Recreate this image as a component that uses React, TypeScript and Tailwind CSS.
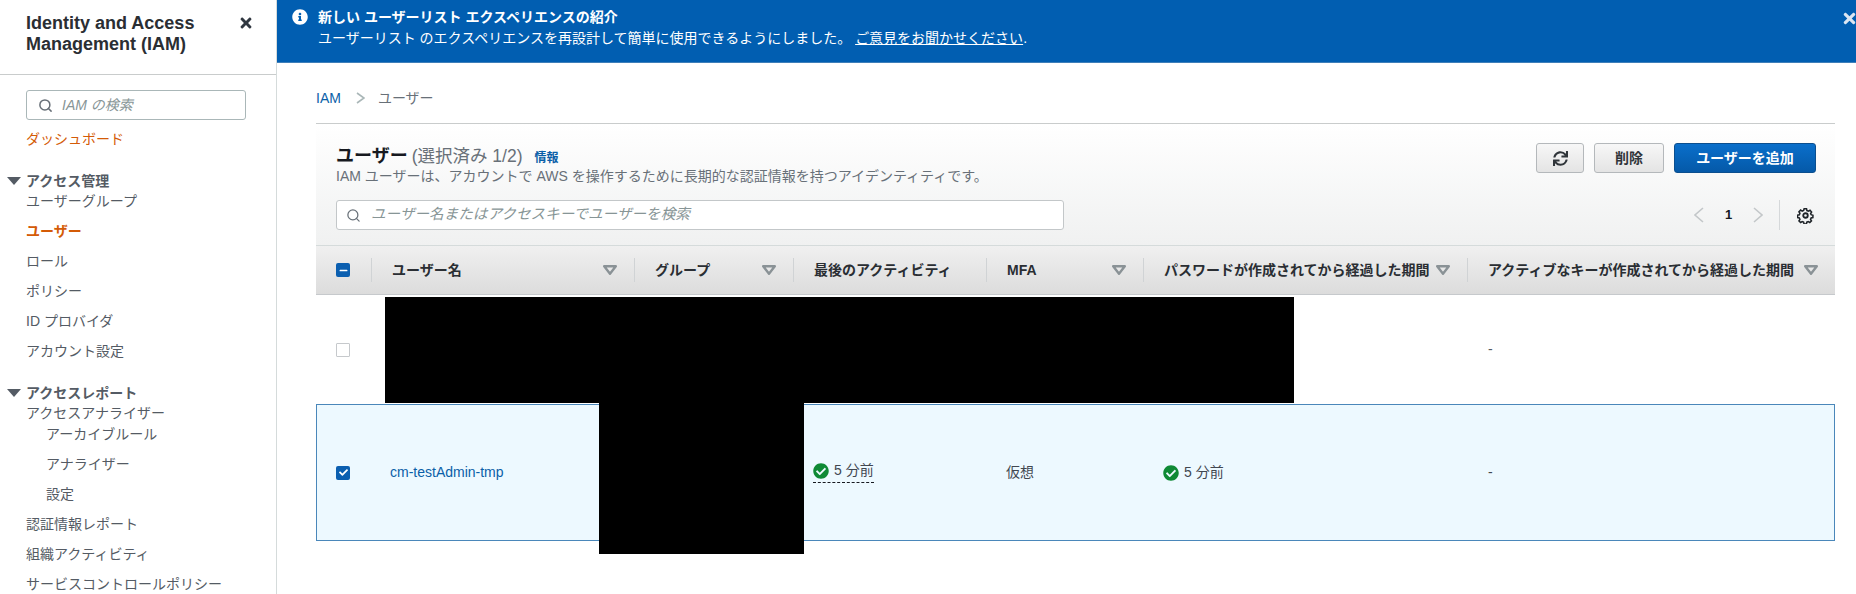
import { FaCheckCircle, FaInfoCircle, FaSync, FaTimes, FaMinus, FaCheck } from "react-icons/fa";
import { Search } from "lucide-react";

const FONT = "font-['Liberation_Sans','Noto_Sans_CJK_JP',sans-serif]";

function Caret() {
  return <span className="w-0 h-0 border-x-[7px] border-x-transparent border-t-[8px] border-t-[#545b64]" />;
}

function NavItem({ children, nested, h = "h-[30px]", className = "" }: { children: React.ReactNode; nested?: boolean; h?: string; className?: string }) {
  return (
    <div className={`flex items-center text-[14px] ${h} ${nested ? "pl-[46px]" : "pl-[26px]"} ${className || "text-[#545b64]"}`}>
      {children}
    </div>
  );
}

function NavGroup({ label }: { label: string }) {
  return (
    <div className="flex items-center h-[20px] pl-[7px] gap-[5px] text-[14px] font-bold text-[#545b64]">
      <Caret />
      <span>{label}</span>
    </div>
  );
}

function Sidebar() {
  return (
    <aside className="w-[277px] shrink-0 border-r border-[#d5dbdb] h-[594px] overflow-hidden">
      <div className="relative h-[75px] border-b border-[#c9cccc] pl-[26px] pt-[13px] text-[18px] leading-[21px] font-bold text-[#2a2e33]">
        Identity and Access
        <br />
        Management (IAM)
        <FaTimes className="absolute left-[238px] top-[15px] text-[#303740] text-[16px]" />
      </div>
      <div className="mt-[15px] ml-[26px] w-[220px] h-[30px] rounded-[3px] border border-[#aab7b8] flex items-center pl-[11px] gap-[9px]">
        <Search className="w-[15px] h-[15px] text-[#687078]" strokeWidth={2.4} />
        <span className="italic text-[14px] text-[#879596]">IAM の検索</span>
      </div>
      <NavItem className="text-[#d45b07] mt-[4px]">ダッシュボード</NavItem>
      <div className="mt-[17px]">
        <NavGroup label="アクセス管理" />
      </div>
      <NavItem h="h-[20px]">ユーザーグループ</NavItem>
      <NavItem className="text-[#d45b07] font-bold mt-[5px]">ユーザー</NavItem>
      <NavItem>ロール</NavItem>
      <NavItem>ポリシー</NavItem>
      <NavItem>ID プロバイダ</NavItem>
      <NavItem>アカウント設定</NavItem>
      <div className="mt-[17px]">
        <NavGroup label="アクセスレポート" />
      </div>
      <NavItem h="h-[20px]">アクセスアナライザー</NavItem>
      <NavItem nested h="h-[20px]" className="text-[#545b64] mt-[1px]">アーカイブルール</NavItem>
      <NavItem nested h="h-[30px]" className="text-[#545b64] mt-[5px]">アナライザー</NavItem>
      <NavItem nested>設定</NavItem>
      <NavItem>認証情報レポート</NavItem>
      <NavItem>組織アクティビティ</NavItem>
      <NavItem>サービスコントロールポリシー</NavItem>
    </aside>
  );
}

function Banner() {
  return (
    <div className="relative h-[63px] bg-[#015eb1] border-b border-[#3f7fb9] flex text-white text-[14px] pl-[15px]">
      <FaInfoCircle className="mt-[9px] text-[16px] shrink-0" />
      <div className="pl-[10px] pt-[7px] leading-[21px]">
        <div className="font-bold">新しい ユーザーリスト エクスペリエンスの紹介</div>
        <div>
          ユーザーリスト のエクスペリエンスを再設計して簡単に使用できるようにしました。 <span className="underline">ご意見をお聞かせください</span>.
        </div>
      </div>
      <FaTimes className="absolute right-[-2px] top-[10px] text-[17px] text-[#dce6f2]" />
    </div>
  );
}

function Checkbox({ state }: { state: "off" | "on" | "mixed" }) {
  if (state === "off") return <span className="block w-[14px] h-[14px] rounded-[1px] border border-[#c6c9cc] bg-white" />;
  return (
    <span className="flex items-center justify-center w-[14px] h-[14px] rounded-[2px] bg-[#0b5fb0] text-white text-[9px]">
      {state === "on" ? <FaCheck /> : <FaMinus />}
    </span>
  );
}

function SortCaret() {
  return (
    <svg width="14" height="10" viewBox="0 0 14 10" className="shrink-0">
      <path d="M1.2 1.2h11.6L7 8.8z" fill="#e8e8e8" stroke="#8a9296" strokeWidth="2.4" strokeLinejoin="round" />
    </svg>
  );
}

function Chevron({ dir, w, h, color, className = "" }: { dir: "left" | "right"; w: number; h: number; color: string; className?: string }) {
  const d = dir === "left" ? `M${w - 1} 1L1 ${h / 2}L${w - 1} ${h - 1}` : `M1 1L${w - 1} ${h / 2}L1 ${h - 1}`;
  return (
    <svg width={w} height={h} viewBox={`0 0 ${w} ${h}`} fill="none" stroke={color} strokeWidth="1.6" className={`shrink-0 ${className}`}>
      <path d={d} />
    </svg>
  );
}

const columns = [
  { label: "ユーザー名", sort: true },
  { label: "グループ", sort: true },
  { label: "最後のアクティビティ", sort: false },
  { label: "MFA", sort: true },
  { label: "パスワードが作成されてから経過した期間", sort: true },
  { label: "アクティブなキーが作成されてから経過した期間", sort: true },
];

const gridCols = "grid grid-cols-[55px_263px_159px_193px_157px_324px_1fr]";

function TableHeader() {
  return (
    <div className={`${gridCols} h-[50px] items-center border-y border-[#d5dbdb] border-b-[#c6c9cc] bg-gradient-to-b from-[#f0f0f0] to-[#dcdcdc] text-[14px] font-bold text-[#2a2e33]`}>
      <div className="pl-[20px]">
        <Checkbox state="mixed" />
      </div>
      {columns.map((c) => (
        <div key={c.label} className="flex items-center justify-between h-[24px] pl-[20px] pr-[17px] border-l border-[#d0d3d5] whitespace-nowrap">
          <span>{c.label}</span>
          {c.sort && <SortCaret />}
        </div>
      ))}
    </div>
  );
}

function TimeAgo() {
  return (
    <span className="flex items-center gap-[5px]">
      <FaCheckCircle className="text-[#0f8a35] text-[16px]" />5 分前
    </span>
  );
}

function UsersTable() {
  return (
    <section className="mt-[13px] mr-[21px] border-t border-[#c9cccc]">
      <div className="relative h-[121px] bg-gradient-to-b from-white to-[#f0f1f1] pl-[20px] pr-[19px]">
        <div className="flex justify-between">
          <div className="pt-[19px]">
            <div className="flex items-baseline text-[#16191f] h-[24px]">
              <span className="text-[18px] font-bold">ユーザー</span>
              <span className="text-[17.5px] text-[#687078] ml-[4px]">(選択済み 1/2)</span>
              <span className="text-[12px] font-bold text-[#0a5fa8] ml-[12px]">情報</span>
            </div>
            <div className="text-[14px] text-[#687078] leading-[20px] mt-[-1px]">
              IAM ユーザーは、アカウントで AWS を操作するために長期的な認証情報を持つアイデンティティです。
            </div>
          </div>
          <div className="flex items-start gap-[10px] pt-[19px] text-[14px] font-bold">
            <button className="w-[48px] h-[30px] flex items-center justify-center rounded-[3px] border border-[#b4b8bb] bg-gradient-to-b from-[#f7f7f7] to-[#e4e4e4] text-[#30353a]">
              <FaSync className="text-[15px]" />
            </button>
            <button className="w-[70px] h-[30px] rounded-[3px] border border-[#b4b8bb] bg-gradient-to-b from-[#f7f7f7] to-[#e4e4e4] text-[#30353a]">
              削除
            </button>
            <button className="w-[142px] h-[30px] rounded-[3px] border border-[#0b4f8f] bg-gradient-to-b from-[#0a6fcb] to-[#0559a8] text-white">
              ユーザーを追加
            </button>
          </div>
        </div>
        <div className="flex justify-between items-center mt-[14px] h-[30px]">
          <div className="w-[728px] h-[30px] rounded-[3px] border border-[#c3c7c9] bg-white flex items-center pl-[9px] gap-[10px]">
            <Search className="w-[15px] h-[15px] text-[#687078]" />
            <span className="italic text-[14.6px] text-[#879596]">ユーザー名またはアクセスキーでユーザーを検索</span>
          </div>
          <div className="flex items-center h-[30px] mr-[2px] text-[#16191f]">
            <Chevron dir="left" w={10} h={16} color="#c3c7c9" />
            <span className="w-[49px] text-center text-[13px] font-bold">1</span>
            <Chevron dir="right" w={10} h={16} color="#c3c7c9" />
            <span className="w-px h-[30px] bg-[#d5d8da] ml-[16px]" />
            <svg width="17" height="17" viewBox="0 0 24 24" fill="none" stroke="#1f2429" strokeWidth="2.6" className="ml-[17px]">
              <path d="M10 2h4l.7 3 2.6 1.1 2.6-1.6 2.6 2.9-1.6 2.5.9 2.1 3 .9-.1 3.9-3 .6-1 2.5 1.6 2.6-2.8 2.6-2.6-1.6-2.4 1-.7 3h-4l-.7-3-2.4-1-2.6 1.6-2.8-2.8 1.6-2.5-1-2.4-3-.7v-4l3-.7 1-2.4-1.6-2.6 2.8-2.8 2.6 1.6 2.4-1z" transform="scale(.84) translate(2 1)" />
              <circle cx="12" cy="12" r="3.2" />
            </svg>
          </div>
        </div>
      </div>
      <TableHeader />
      <div className={`${gridCols} h-[109px] items-center text-[14px] text-[#414750]`}>
        <div className="pl-[20px]">
          <Checkbox state="off" />
        </div>
        <div className="col-start-7 pl-[21px] text-[#545b64]">-</div>
      </div>
      <div className={`${gridCols} h-[137px] items-center shadow-[inset_0_0_0_1px_#4a87ba] bg-[#edf9ff] text-[14px] text-[#414750]`}>
        <div className="pl-[20px]">
          <Checkbox state="on" />
        </div>
        <div className="pl-[19px] text-[#0a5fa8]">cm-testAdmin-tmp</div>
        <div />
        <div className="pl-[20px]">
          <span className="inline-block border-b border-dashed border-[#16191f] pb-[1px]">
            <TimeAgo />
          </span>
        </div>
        <div className="pl-[20px]">仮想</div>
        <div className="pl-[20px]">
          <TimeAgo />
        </div>
        <div className="pl-[21px]">-</div>
      </div>
    </section>
  );
}

export default function App() {
  return (
    <div className={`relative w-[1856px] h-[594px] overflow-hidden bg-white flex ${FONT}`}>
      <Sidebar />
      <main className="flex-1 min-w-0">
        <Banner />
        <div className="pl-[39px]">
          <div className="flex items-center h-[24px] mt-[23px] text-[14px]">
            <span className="text-[#0a5fa8]">IAM</span>
            <Chevron dir="right" w={9} h={12} color="#aab7b8" className="ml-[15px] mr-[13px]" />
            <span className="text-[#687078]">ユーザー</span>
          </div>
          <UsersTable />
        </div>
      </main>
      {/* redaction blocks in the source picture */}
      <div className="absolute left-[385px] top-[297px] w-[909px] h-[106px] bg-black" />
      <div className="absolute left-[599px] top-[400px] w-[205px] h-[154px] bg-black" />
    </div>
  );
}
